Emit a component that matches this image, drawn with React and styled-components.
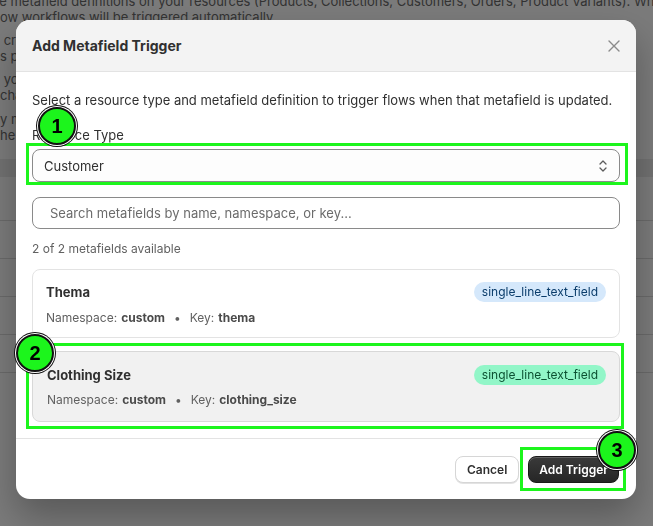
import React from 'react';
import styled, { createGlobalStyle } from 'styled-components';

const GlobalStyle = createGlobalStyle`
  html, body {
    margin: 0;
    padding: 0;
    width: 653px;
    height: 526px;
    overflow: hidden;
    background: #ffffff;
    font-family: Inter, "Liberation Sans", sans-serif;
  }
`;

const Page = styled.div`
  width: 653px;
  height: 526px;
  overflow: hidden;
  color: #6a6a6a;
  font-size: 13px;
  line-height: 16px;
`;

const PageText = styled.p`
  margin: 0 0 ${({ $gap }) => $gap || 0}px -${({ $shift }) => $shift || 0}px;
  white-space: nowrap;
`;

const Table = styled.div`
  margin-top: 16px;
`;

const TableHead = styled.div`
  height: 18px;
  background: #ebebeb;
`;

const TableRow = styled.div`
  height: 37px;
  border-bottom: 1px solid #dcdcdc;
`;

const Overlay = styled.div`
  position: fixed;
  inset: 0;
  background: rgba(0, 0, 0, 0.52);
  display: flex;
  justify-content: flex-start;
  align-items: flex-start;
  padding: 20px 0 0 16px;
`;

const Modal = styled.div`
  position: relative;
  width: 620px;
  background: #ffffff;
  border-radius: 14px;
  box-shadow: 0 18px 36px rgba(0, 0, 0, 0.28);
  color: #303030;
`;

const Header = styled.div`
  height: 52px;
  display: flex;
  align-items: center;
  justify-content: space-between;
  padding: 0 16px;
  background: #f3f3f3;
  border-bottom: 1px solid #e3e3e3;
  border-radius: 14px 14px 0 0;
  box-sizing: border-box;
`;

const Title = styled.h2`
  margin: 0;
  font-size: 14px;
  font-weight: 650;
  color: #303030;
`;

const CloseButton = styled.button`
  border: 0;
  background: none;
  padding: 0;
  width: 20px;
  height: 20px;
  display: flex;
  align-items: center;
  justify-content: center;
  margin-right: -4px;
`;

const Body = styled.div`
  padding: 18px 16px 16px;
  display: flex;
  flex-direction: column;
`;

const Description = styled.p`
  margin: 0;
  font-size: 13px;
  line-height: 20px;
  color: #303030;
`;

const Label = styled.label`
  margin-top: 17px;
  font-size: 13px;
  line-height: 16px;
  color: #303030;
`;

const Select = styled.div`
  margin-top: 6px;
  height: 33px;
  box-sizing: border-box;
  border: 1px solid #8a8a8a;
  border-radius: 8px;
  background: #fdfdfd;
  display: flex;
  align-items: center;
  justify-content: space-between;
  padding: 0 10px 0 11px;
  font-size: 13px;
  color: #303030;
`;

const Search = styled.div`
  margin-top: 15px;
  height: 32px;
  box-sizing: border-box;
  border: 1px solid #8a8a8a;
  border-radius: 8px;
  display: flex;
  align-items: center;
  padding: 0 17px;
  font-size: 13px;
  color: #6b6b6b;
`;

const Count = styled.div`
  margin-top: 12px;
  font-size: 12px;
  line-height: 16px;
  color: #616161;
`;

const List = styled.div`
  margin-top: 12px;
  display: flex;
  flex-direction: column;
  gap: 13px;
`;

const Card = styled.div`
  border: 1px solid ${({ $selected }) => ($selected ? '#d8d8d8' : '#e3e3e3')};
  background: ${({ $selected }) => ($selected ? '#f1f1f1' : '#ffffff')};
  border-radius: 8px;
  padding: ${({ $selected }) => ($selected ? '13px 13px 13px 14px' : '12px 13px 11px 13px')};
  display: flex;
  flex-direction: column;
  gap: ${({ $selected }) => ($selected ? 7 : 8)}px;
`;

const CardTop = styled.div`
  display: flex;
  align-items: center;
  justify-content: space-between;
`;

const CardTitle = styled.div`
  font-size: 13px;
  font-weight: 650;
  color: #303030;
  line-height: 18px;
`;

const Badge = styled.span`
  font-size: 12px;
  line-height: 20px;
  padding: 0 8px;
  border-radius: 10px;
  background: ${({ $tone }) => ($tone === 'green' ? '#92f6c8' : '#d5e8fb')};
  color: ${({ $tone }) => ($tone === 'green' ? '#0c5132' : '#0b3d6b')};
`;

const Meta = styled.div`
  font-size: 12px;
  line-height: 16px;
  color: #616161;
  display: flex;
  align-items: center;

  b {
    color: #4a4a4a;
    font-weight: 650;
    margin-left: 4px;
  }
`;

const Dot = styled.span`
  margin: 0 9px;
  color: #616161;
`;

const Footer = styled.div`
  height: 60px;
  border-top: 1px solid #e3e3e3;
  display: flex;
  align-items: center;
  justify-content: flex-end;
  gap: 9px;
  padding: 0 17px;
`;

const Button = styled.button`
  height: 27px;
  padding: 0 ${({ $primary }) => ($primary ? 10 : 11)}px;
  border-radius: 8px;
  font-family: Inter, "Liberation Sans", sans-serif;
  font-size: 12px;
  font-weight: 600;
  border: 1px solid ${({ $primary }) => ($primary ? '#1a1a1a' : '#d6d6d6')};
  background: ${({ $primary }) =>
    $primary ? 'linear-gradient(#3a3a3a, #262626)' : '#ffffff'};
  color: ${({ $primary }) => ($primary ? '#ffffff' : '#303030')};
  box-shadow: ${({ $primary }) =>
    $primary ? 'inset 0 1px 0 rgba(255,255,255,0.2)' : '0 1px 0 #e3e3e3'};
`;

const Highlight = styled.div`
  position: absolute;
  left: ${({ $x }) => $x}px;
  top: ${({ $y }) => $y}px;
  width: ${({ $w }) => $w}px;
  height: ${({ $h }) => $h}px;
  border: 3px solid #1cf51c;
  box-sizing: border-box;
  pointer-events: none;
`;

const Marker = styled.div`
  position: absolute;
  left: ${({ $x }) => $x - 19}px;
  top: ${({ $y }) => $y - 19}px;
  width: 38px;
  height: 38px;
  border-radius: 50%;
  background: #1cf51c;
  border: 2px solid #111111;
  box-shadow: 0 0 0 1px #ffffff, 0 0 0 2px #111111;
  box-sizing: border-box;
  display: flex;
  align-items: center;
  justify-content: center;
  font-family: "Liberation Sans", Arial, sans-serif;
  font-weight: 700;
  font-size: 20px;
  color: #000000;
`;

const Chevrons = () => (
  <svg width="12" height="16" viewBox="0 0 12 16" fill="none" stroke="#5c5c5c" strokeWidth="1.3" strokeLinecap="round" strokeLinejoin="round">
    <path d="M3 6l3-3 3 3" />
    <path d="M3 10l3 3 3-3" />
  </svg>
);

const CloseIcon = () => (
  <svg width="12" height="12" viewBox="0 0 12 12" stroke="#8a8a8a" strokeWidth="1.4" strokeLinecap="round">
    <path d="M1 1l10 10M11 1L1 11" />
  </svg>
);

const metafields = [
  { name: 'Thema', key: 'thema', tone: 'blue' },
  { name: 'Clothing Size', key: 'clothing_size', tone: 'green', selected: true },
];

export default function App() {
  return (
    <>
      <GlobalStyle />
      <Page>
        <PageText $shift={20} style={{ marginTop: -7 }}>
          ome metafield definitions on your resources (Products, Collections, Customers, Orders, Product Variants). When a metafield
        </PageText>
        <PageText $gap={7}>ow workflows will be triggered automatically.</PageText>
        <PageText>&nbsp;create a metafield definition in Shopify admin for the resource you want to watch, such as products</PageText>
        <PageText $gap={7}>s preferences or sizes, then add a trigger here so flows can react whenever this</PageText>
        <PageText>&nbsp;you edit the value of a metafield, Flow checks every trigger you have created</PageText>
        <PageText $gap={8}>changes are sent to the matching flows in the order they arrive</PageText>
        <PageText>y metafield triggers can be removed at any time, flows that are active are</PageText>
        <PageText>he</PageText>
        <Table>
          <TableHead />
          <TableRow style={{ height: 43 }} />
          <TableRow />
          <TableRow />
          <TableRow />
          <TableRow />
        </Table>
      </Page>
      <Overlay>
        <Modal>
          <Header>
            <Title>Add Metafield Trigger</Title>
            <CloseButton aria-label="Close">
              <CloseIcon />
            </CloseButton>
          </Header>
          <Body>
            <Description>
              Select a resource type and metafield definition to trigger flows when that metafield is updated.
            </Description>
            <Label>Resource Type</Label>
            <Select>
              <span>Customer</span>
              <Chevrons />
            </Select>
            <Search>Search metafields by name, namespace, or key...</Search>
            <Count>2 of 2 metafields available</Count>
            <List>
              {metafields.map((m) => (
                <Card key={m.key} $selected={m.selected}>
                  <CardTop>
                    <CardTitle>{m.name}</CardTitle>
                    <Badge $tone={m.tone}>single_line_text_field</Badge>
                  </CardTop>
                  <Meta>
                    Namespace:<b>custom</b>
                    <Dot>•</Dot>
                    Key:<b>{m.key}</b>
                  </Meta>
                </Card>
              ))}
            </List>
          </Body>
          <Footer>
            <Button>Cancel</Button>
            <Button $primary>Add Trigger</Button>
          </Footer>

          <Highlight $x={10} $y={123} $w={602} $h={42} />
          <Highlight $x={10} $y={323} $w={598} $h={86} />
          <Highlight $x={504} $y={427} $w={106} $h={44} />
          <Marker $x={41} $y={106}>1</Marker>
          <Marker $x={19} $y={333}>2</Marker>
          <Marker $x={601} $y={430}>3</Marker>
        </Modal>
      </Overlay>
    </>
  );
}
